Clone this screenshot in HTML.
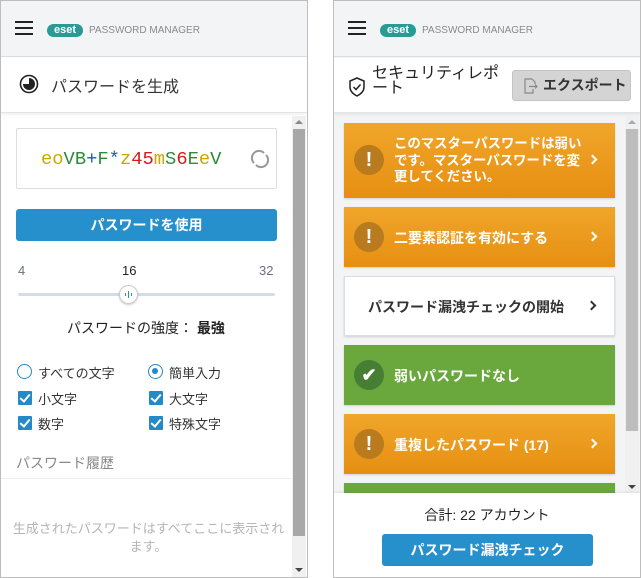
<!DOCTYPE html>
<html><head><meta charset="utf-8"><style>
*{margin:0;padding:0;box-sizing:border-box}
body{width:641px;height:578px;background:#fff;position:relative;overflow:hidden;font-family:"Liberation Sans","Noto Sans CJK JP",sans-serif;color:#333}
.a{position:absolute}
.panel{position:absolute;top:0;height:578px;border:1px solid #bdbdbd;background:#fff;overflow:hidden}
.hdr{position:absolute;left:0;right:0;top:0;height:56px;background:#f3f4f6;border-bottom:1px solid #dcdcdc}
.ham{position:absolute;left:14px;top:20px;width:18px;height:14px;border-top:2px solid #222;border-bottom:2px solid #222}
.ham:after{content:"";position:absolute;left:0;right:0;top:4px;height:2px;background:#222}
.logo{position:absolute;left:46px;top:23px;width:36px;height:13px;border-radius:7px;background:#2a9a96;color:#fff;font-weight:bold;font-size:11px;line-height:13px;text-align:center}
.pm{position:absolute;left:88px;top:23px;font-size:10px;color:#8a8a8a;line-height:13px}
.title{position:absolute;left:0;right:0;top:57px;height:55px;background:#fff;border-bottom:1px solid #e4e4e4;box-shadow:0 2px 3px rgba(0,0,0,.06)}
.sb{position:absolute;width:14px;background:#f0f0f0}
.thumb{position:absolute;left:1px;right:1px;background:#a8a8a8}
.btn{position:absolute;background:#2590cc;color:#fff;font-weight:bold;font-size:14px;text-align:center;border-radius:3px}
.card{position:absolute;left:10px;width:271px;color:#fff;font-weight:bold;font-size:14px;box-shadow:0 1px 2px rgba(0,0,0,.15)}
.or{background:linear-gradient(#f0a62a,#e68f12)}
.gr{background:#6aa83e}
.ic{position:absolute;left:10px;width:30px;height:30px;border-radius:50%;text-align:center;line-height:30px;font-size:20px}
.chev{position:absolute;right:19px;width:7px;height:7px;border:solid #fff;border-width:2.5px 2.5px 0 0;transform:rotate(45deg)}
.cb{position:absolute;width:14px;height:14px;background:#2489c7;border-radius:1px}
.cb:after{content:"";position:absolute;left:4px;top:1px;width:4px;height:8px;border:solid #fff;border-width:0 2px 2px 0;transform:rotate(40deg)}
.lbl{position:absolute;font-size:13px;color:#333}
</style></head><body>

<div class="panel" style="left:0;width:308px">
  <div class="hdr"><div class="ham"></div><div class="logo">eset</div><div class="pm">PASSWORD MANAGER</div></div>
  <div class="title">
    <svg class="a" style="left:18px;top:16px" width="20" height="20" viewBox="0 0 20 20"><circle cx="10" cy="10" r="8.5" fill="none" stroke="#222" stroke-width="1.6"/><path d="M10 4 A6 6 0 1 1 4 10 L10 10Z" fill="#222"/><circle cx="6" cy="13" r="1" fill="#222"/></svg>
    <div class="a" style="left:50px;top:15px;font-size:16px;color:#333">パスワードを生成</div>
  </div>
  <div class="sb" style="left:291px;top:115px;height:462px"><div class="a" style="left:3px;top:4px;border:4px solid transparent;border-bottom:4px solid #888;border-top:0"></div><div class="thumb" style="top:13px;height:407px"></div><div class="a" style="left:3px;bottom:6px;border:4px solid transparent;border-top:4px solid #444;border-bottom:0"></div></div>
  <div class="a" style="left:15px;top:127px;width:261px;height:61px;border:1px solid #ddd;border-radius:2px"></div>
  <div class="a" style="left:40px;top:147px;font-family:'Liberation Mono',monospace;font-size:18.8px;line-height:22px"><span style="color:#c9a800">eo</span><span style="color:#2e8b3a">VB</span><span style="color:#1f5fa0">+</span><span style="color:#2e8b3a">F</span><span style="color:#1f5fa0">*</span><span style="color:#c9a800">z</span><span style="color:#d41c1c">45</span><span style="color:#c9a800">m</span><span style="color:#2e8b3a">S</span><span style="color:#d41c1c">6</span><span style="color:#2e8b3a">E</span><span style="color:#c9a800">e</span><span style="color:#2e8b3a">V</span></div>
  <svg class="a" style="left:249px;top:148px" width="20" height="20" viewBox="0 0 20 20"><path d="M4 14 A7 7 0 0 1 14 4" fill="none" stroke="#999" stroke-width="2"/><path d="M16 6 A7 7 0 0 1 6 16" fill="none" stroke="#999" stroke-width="2"/></svg>
  <div class="btn" style="left:15px;top:208px;width:261px;height:32px;line-height:32px">パスワードを使用</div>
  <div class="a" style="left:17px;top:262px;font-size:13px;color:#6a7080">4</div>
  <div class="a" style="left:121px;top:262px;font-size:13px;color:#222">16</div>
  <div class="a" style="left:258px;top:262px;font-size:13px;color:#6a7080">32</div>
  <div class="a" style="left:17px;top:292px;width:257px;height:3px;background:#d5dbec;border-radius:2px"></div>
  <div class="a" style="left:118px;top:284px;width:19px;height:19px;border-radius:50%;background:#fff;border:1px solid #ccc;box-shadow:0 1px 2px rgba(0,0,0,.2)"><div class="a" style="left:8px;top:5px;width:1px;height:7px;background:#2a9a96"></div><div class="a" style="left:5px;top:7px;width:1px;height:3px;background:#2a9a96"></div><div class="a" style="left:11px;top:7px;width:1px;height:3px;background:#2a9a96"></div></div>
  <div class="a" style="left:0;width:290px;top:317px;text-align:center;font-size:14px;color:#222">パスワードの強度： <b>最強</b></div>
  <div class="a" style="left:16px;top:363px;width:15px;height:15px;border-radius:50%;border:1.5px solid #2489c7"></div>
  <div class="lbl" style="left:37px;top:362px">すべての文字</div>
  <div class="a" style="left:147px;top:363px;width:15px;height:15px;border-radius:50%;border:1.5px solid #2489c7"><div class="a" style="left:3px;top:3px;width:6px;height:6px;border-radius:50%;background:#2489c7"></div></div>
  <div class="lbl" style="left:168px;top:362px">簡単入力</div>
  <div class="cb" style="left:17px;top:390px"></div><div class="lbl" style="left:37px;top:388px">小文字</div>
  <div class="cb" style="left:148px;top:390px"></div><div class="lbl" style="left:168px;top:388px">大文字</div>
  <div class="cb" style="left:17px;top:415px"></div><div class="lbl" style="left:37px;top:413px">数字</div>
  <div class="cb" style="left:148px;top:415px"></div><div class="lbl" style="left:168px;top:413px">特殊文字</div>
  <div class="a" style="left:15px;top:452px;font-size:14px;color:#888">パスワード履歴</div>
  <div class="a" style="left:0;top:477px;width:290px;height:1px;background:#eee"></div>
  <div class="a" style="left:10px;width:275px;top:519px;text-align:center;font-size:13px;line-height:18px;color:#b5b5b5">生成されたパスワードはすべてここに表示されます。</div>
</div>

<div class="panel" style="left:333px;width:308px;background:#f3f4f6">
  <div class="hdr"><div class="ham"></div><div class="logo">eset</div><div class="pm">PASSWORD MANAGER</div></div>
  <div class="title">
    <svg class="a" style="left:14px;top:19px" width="18" height="20" viewBox="0 0 18 20"><path d="M9 1 L16 4 V10 C16 14 13 17 9 19 C5 17 2 14 2 10 V4Z" fill="none" stroke="#222" stroke-width="1.5"/><path d="M5.5 10 L8 12.5 L12.5 7.5" fill="none" stroke="#222" stroke-width="1.5"/></svg>
    <div class="a" style="left:38px;top:8px;font-size:16px;line-height:15px;color:#222;width:140px">セキュリティレポート</div>
    <div class="a" style="left:178px;top:12px;width:119px;height:31px;background:#d4d4d4;border:1px solid #c4c4c4;border-radius:3px;font-weight:bold;font-size:14px;line-height:29px;color:#333;padding-left:30px">エクスポート
      <svg class="a" style="left:10px;top:7px" width="16" height="16" viewBox="0 0 16 16"><path d="M9 1H2V15H10V11M9 1L12 4V6" fill="none" stroke="#888" stroke-width="1.2"/><path d="M6 8.5H14M12 6.5L14 8.5L12 10.5" fill="none" stroke="#888" stroke-width="1.2"/></svg>
    </div>
  </div>
  <div class="sb" style="left:291px;top:115px;height:377px;background:#f0f0f0"><div class="a" style="left:3px;top:4px;border:4px solid transparent;border-bottom:4px solid #aaa;border-top:0"></div><div class="thumb" style="top:13px;height:302px;background:#bdbdbd"></div><div class="a" style="left:3px;bottom:4px;border:4px solid transparent;border-top:4px solid #444;border-bottom:0"></div></div>
  <div class="card or" style="top:122px;height:75px"><div class="ic" style="top:22px;background:#b97b1e">!</div><div class="a" style="left:50px;top:13px;line-height:16.5px;width:192px;font-size:13.4px">このマスターパスワードは弱いです。マスターパスワードを変更してください。</div><div class="chev" style="top:33px"></div></div>
  <div class="card or" style="top:206px;height:60px"><div class="ic" style="top:15px;background:#b97b1e">!</div><div class="a" style="left:50px;top:21px">二要素認証を有効にする</div><div class="chev" style="top:26px"></div></div>
  <div class="card" style="top:275px;height:60px;background:#fff;color:#333;border:1px solid #ddd"><div class="a" style="left:23px;top:20px">パスワード漏洩チェックの開始</div><div class="chev" style="top:25px;border-color:#333"></div></div>
  <div class="card gr" style="top:344px;height:60px"><div class="ic" style="top:15px;background:#467f33;font-size:18px">✔</div><div class="a" style="left:50px;top:21px">弱いパスワードなし</div></div>
  <div class="card or" style="top:413px;height:60px"><div class="ic" style="top:15px;background:#b97b1e">!</div><div class="a" style="left:50px;top:21px">重複したパスワード (17)</div><div class="chev" style="top:26px"></div></div>
  <div class="card gr" style="top:482px;height:20px"></div>
  <div class="a" style="left:0;right:0;top:492px;height:86px;background:#fff;box-shadow:0 -1px 3px rgba(0,0,0,.08)">
    <div class="a" style="left:0;right:0;top:12px;text-align:center;font-size:14px;color:#222">合計: 22 アカウント</div>
    <div class="btn" style="left:48px;top:41px;width:211px;height:32px;line-height:32px">パスワード漏洩チェック</div>
  </div>
</div>
</body></html>
